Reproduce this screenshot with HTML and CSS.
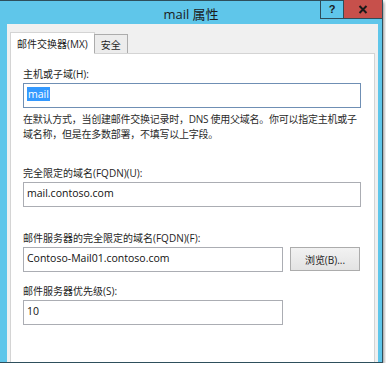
FILE: index.html
```html
<!DOCTYPE html>
<html lang="zh-CN">
<head>
    <meta charset="UTF-8">
    <meta name="viewport" content="width=device-width, initial-scale=1.0">
    <title>mail 属性</title>
    <link rel="stylesheet" href="styles.css">
</head>
<body>
    <div class="window">
        <div class="titlebar">
            <span class="title">mail 属性</span>
            <div class="caption-buttons">
                <span class="cap-btn help">?</span>
                <span class="cap-btn close">
                    <svg width="10" height="9" viewBox="0 0 10 9">
                        <path d="M1.5 1 L8.5 8 M8.5 1 L1.5 8" stroke="#1a1a1a" stroke-width="2"/>
                    </svg>
                </span>
            </div>
        </div>

        <div class="client">
            <div class="tabs">
                <span class="tab active">邮件交换器(MX)</span>
                <span class="tab">安全</span>
            </div>

            <div class="panel">
                <div class="field">
                    <label>主机或子域(H):</label>
                    <div class="textbox focused"><span class="selected">mail</span></div>
                </div>

                <p class="note">在默认方式，当创建邮件交换记录时，DNS 使用父域名。你可以指定主机或子<br>域名称，但是在多数部署，不填写以上字段。</p>

                <div class="field spaced">
                    <label>完全限定的域名(FQDN)(U):</label>
                    <div class="textbox">mail.contoso.com</div>
                </div>

                <div class="field spaced">
                    <label>邮件服务器的完全限定的域名(FQDN)(F):</label>
                    <div class="row">
                        <div class="textbox short">Contoso-Mail01.contoso.com</div>
                        <span class="button">浏览(B)...</span>
                    </div>
                </div>

                <div class="field">
                    <label>邮件服务器优先级(S):</label>
                    <div class="textbox short">10</div>
                </div>
            </div>
        </div>
    </div>
</body>
</html>
```

FILE: styles.css
```css
* {
    margin: 0;
    padding: 0;
    box-sizing: border-box;
}

body {
    background: #ffffff;
    font-family: "Open Sans", "Noto Sans CJK SC", sans-serif;
    font-size: 10px;
    color: #1e1e1e;
}

.window {
    width: 383px;
    height: 363px;
    background: #5fc6ea;
    border: 1px solid #2e4f5c;
    border-left: none;
    box-shadow: 1px 2px 3px rgba(0, 0, 0, 0.45);
    display: flex;
    flex-direction: column;
}

.titlebar {
    position: relative;
    height: 23px;
    display: flex;
    justify-content: center;
    align-items: center;
}

.title {
    font-size: 13px;
    color: #1b1b1b;
    padding-top: 1px;
}

.caption-buttons {
    position: absolute;
    top: -1px;
    right: 0;
    display: flex;
}

.cap-btn {
    height: 19px;
    display: flex;
    align-items: center;
    justify-content: center;
    border: 1px solid #2f4d59;
    border-top: none;
}

.help {
    width: 23px;
    font-family: "Liberation Sans", sans-serif;
    font-weight: bold;
    font-size: 11px;
    color: #1a1a1a;
    border-right: none;
}

.close {
    width: 39px;
    background: #c7504b;
    border-right: none;
}

.client {
    flex: 1;
    margin: 0 4px 0 7px;
    background: #f0f0f0;
    padding: 8px 3px 0 3px;
    display: flex;
    flex-direction: column;
}

.tabs {
    display: flex;
    align-items: flex-end;
    height: 21px;
    position: relative;
    z-index: 1;
}

.tab {
    height: 19px;
    padding: 0 6px;
    display: flex;
    align-items: center;
    background: #ececec;
    border: 1px solid #acacac;
    border-bottom: none;
    margin-left: -1px;
}

.tab.active {
    height: 22px;
    margin-left: 0;
    margin-bottom: -1px;
    padding: 0 6px 0 6px;
    background: #ffffff;
    border-color: #d4d4d4;
}

.panel {
    flex: 1;
    background: #ffffff;
    border: 1px solid #d4d4d4;
    border-bottom: none;
    padding: 13px 13px 0 12px;
}

.field label {
    display: block;
    line-height: 14px;
    margin-bottom: 2px;
}

.textbox {
    height: 25px;
    border: 1px solid #abadb3;
    padding: 3px 3px;
    line-height: 15px;
    font-size: 10.5px;
    color: #111;
}

.textbox.focused {
    border-color: #6f8fb4;
}

.selected {
    background: #3399ff;
    color: #ffffff;
    padding: 0 1px;
}

.note {
    margin-top: 4px;
    line-height: 15px;
    color: #2a2a2a;
    white-space: nowrap;
    letter-spacing: -0.25px;
}

.field.spaced {
    margin-top: 24px;
}

.field + .field {
    margin-top: 12px;
}

.field.spaced + .field.spaced {
    margin-top: 24px;
}

.row {
    display: flex;
    gap: 7px;
}

.textbox.short {
    width: 260px;
}

.button {
    width: 70px;
    height: 24px;
    display: flex;
    align-items: center;
    justify-content: center;
    background: linear-gradient(#f2f2f2, #e3e3e3);
    border: 1px solid #acacac;
}
```
